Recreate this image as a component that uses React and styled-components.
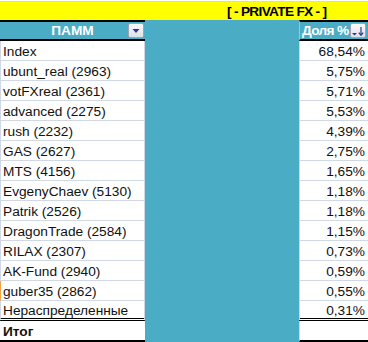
import React from 'react';
import styled, { createGlobalStyle } from 'styled-components';

const Global = createGlobalStyle`
  html, body { margin: 0; padding: 0; background: #fff; }
  body { font-family: "Liberation Sans", Arial, sans-serif; }
  * { box-sizing: border-box; }
`;

const TEAL = '#4BACC6';
const GRID = '#D0D7E5';

const Sheet = styled.div`
  width: 368px;
  height: 342px;
  overflow: hidden;
  display: flex;
  flex-direction: column;
  font-family: "Liberation Sans", Arial, sans-serif;
  font-size: 13.7px;
  color: #111;
  background: #fff;
`;

const PrevRow = styled.div`
  flex: none;
  height: 2px;
  border-bottom: 1px solid ${GRID};
`;

const TitleBar = styled.div`
  flex: none;
  height: 18px;
  background: #ffff00;
  color: #000;
  font-weight: bold;
  line-height: 17px;
  padding-top: 1px;
  padding-left: 227px;
  letter-spacing: -0.7px;
  white-space: nowrap;
`;

const Body = styled.div`
  flex: 1;
  display: grid;
  grid-template-columns: 145px 154px 69px;
  min-height: 0;
`;

const Column = styled.div`
  display: flex;
  flex-direction: column;
  min-width: 0;
`;

const TealBlock = styled.div`
  background: ${TEAL};
`;

const HeadCell = styled.div`
  position: relative;
  height: 21px;
  border-top: 2px solid #000;
  border-bottom: 2px solid #000;
  background: ${TEAL};
  color: #fff;
  font-weight: bold;
  padding-top: 1px;
  line-height: 16px;
  white-space: nowrap;
  text-align: ${(p) => p.$align || 'left'};
  padding-left: ${(p) => p.$pl || 0}px;
  letter-spacing: ${(p) => p.$ls || 0}px;
  border-left: ${(p) => (p.$sep ? '1px solid #8fcbdb' : 'none')};
`;

const FilterButton = styled.span`
  position: absolute;
  top: 1px;
  right: ${(p) => p.$right}px;
  width: 16px;
  height: 15px;
  border: 1px solid #9ba5b7;
  border-radius: 2px;
  background: linear-gradient(#fbfbfc, #dfe0e6);
  display: flex;
  align-items: center;
  justify-content: center;
`;

const Cell = styled.div`
  height: 20px;
  padding-top: 2px;
  line-height: ${(p) => (p.$last ? 15 : 17)}px;
  white-space: nowrap;
  overflow: hidden;
  border-bottom: ${(p) => (p.$last ? '3px double #000' : `1px solid ${GRID}`)};
  text-align: ${(p) => p.$align || 'left'};
  padding-left: ${(p) => (p.$align === 'right' ? 0 : 2)}px;
  padding-right: ${(p) => (p.$align === 'right' ? 3 : 0)}px;
  border-left: 1px solid ${(p) => (p.$marked ? '#f4a23c' : GRID)};
  border-right: ${(p) => (p.$align === 'right' ? 'none' : `1px solid ${GRID}`)};
`;

const TotalCell = styled.div`
  height: 21px;
  padding-top: 2px;
  line-height: 17px;
  font-weight: bold;
  white-space: nowrap;
  border-bottom: 2px solid #000;
  padding-left: 3px;
  border-left: ${(p) => (p.$sep ? `1px solid ${GRID}` : 'none')};
`;

const rows = [
  ['Index', '68,54%'],
  ['ubunt_real (2963)', '5,75%'],
  ['votFXreal (2361)', '5,71%'],
  ['advanced (2275)', '5,53%'],
  ['rush (2232)', '4,39%'],
  ['GAS (2627)', '2,75%'],
  ['MTS (4156)', '1,65%'],
  ['EvgenyChaev (5130)', '1,18%'],
  ['Patrik (2526)', '1,18%'],
  ['DragonTrade (2584)', '1,15%'],
  ['RILAX (2307)', '0,73%'],
  ['AK-Fund (2940)', '0,59%'],
  ['guber35 (2862)', '0,55%'],
  ['Нераспределенные', '0,31%'],
];

const DropIcon = () => (
  <svg width="14" height="13" viewBox="0 0 14 13">
    <polygon points="3.5,5 10.5,5 7,9" fill="#2b3c8e" />
  </svg>
);

const SortIcon = () => (
  <svg width="14" height="13" viewBox="0 0 14 13">
    <polygon points="1,9 6,9 3.5,11.5" fill="#2b3c8e" />
    <line x1="10" y1="3" x2="10" y2="11" stroke="#2b3c8e" strokeWidth="1.2" />
    <polyline points="7.8,8.6 10,11.2 12.2,8.6" fill="none" stroke="#2b3c8e" strokeWidth="1.2" />
  </svg>
);

export default function App() {
  return (
    <>
      <Global />
      <Sheet>
        <PrevRow />
        <TitleBar>[ - PRIVATE FX - ]</TitleBar>
        <Body>
          <Column>
            <HeadCell $align="center">
              ПАММ
              <FilterButton $right={1}>
                <DropIcon />
              </FilterButton>
            </HeadCell>
            {rows.map(([name], i) => (
              <Cell key={name} $last={i === rows.length - 1} $marked={i === rows.length - 2}>
                {name}
              </Cell>
            ))}
            <TotalCell>Итог</TotalCell>
          </Column>
          <TealBlock />
          <Column>
            <HeadCell $pl={2} $ls={-0.7} $sep>
              Доля %
              <FilterButton $right={2}>
                <SortIcon />
              </FilterButton>
            </HeadCell>
            {rows.map(([name, share], i) => (
              <Cell key={name} $align="right" $last={i === rows.length - 1}>
                {share}
              </Cell>
            ))}
            <TotalCell $sep />
          </Column>
        </Body>
      </Sheet>
    </>
  );
}
